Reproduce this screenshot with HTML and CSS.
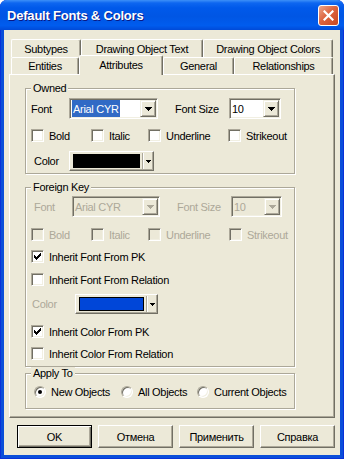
FILE: index.html
```html
<!DOCTYPE html>
<html lang="en">
  <head>
    <meta charset="UTF-8" />
    <title>Default Fonts &amp; Colors</title>
    <link rel="stylesheet" href="styles.css">
  </head>
  <body>
    <div class="window">
      <div class="titlebar">
        <span class="title">Default Fonts &amp; Colors</span>
        <span class="close">
          <svg width="11" height="11" viewBox="0 0 11 11"><path d="M1.5 1.5l8 8M9.5 1.5l-8 8" stroke="#fff" stroke-width="2.2" stroke-linecap="square"/></svg>
        </span>
      </div>

      <div class="client">
        <!-- Tabs, back row first -->
        <div class="tab-row back">
          <div class="tab t-subtypes">Subtypes</div>
          <div class="tab t-text">Drawing Object Text</div>
          <div class="tab t-colors">Drawing Object Colors</div>
        </div>
        <div class="tab-row front">
          <div class="tab t-entities">Entities</div>
          <div class="tab t-attributes selected">Attributes</div>
          <div class="tab t-general">General</div>
          <div class="tab t-relationships">Relationships</div>
        </div>

        <div class="panel">
          <!-- Owned -->
          <div class="group owned">
            <div class="group-label">Owned</div>
            <div class="row font-row">
              <span class="field-label font-label">Font</span>
              <div class="combo combo-font">
                <span class="combo-text"><span class="sel">Arial CYR</span></span>
                <span class="combo-btn"><svg width="7" height="4"><path d="M0 0h7v1H6v1H5v1H4v1H3V3H2V2H1V1H0z"/></svg></span>
              </div>
              <span class="field-label size-label">Font Size</span>
              <div class="combo combo-size">
                <span class="combo-text">10</span>
                <span class="combo-btn"><svg width="7" height="4"><path d="M0 0h7v1H6v1H5v1H4v1H3V3H2V2H1V1H0z"/></svg></span>
              </div>
            </div>
            <div class="row style-row">
              <span class="check c-bold"><span class="box"></span>Bold</span>
              <span class="check c-italic"><span class="box"></span>Italic</span>
              <span class="check c-under"><span class="box"></span>Underline</span>
              <span class="check"><span class="box"></span>Strikeout</span>
            </div>
            <div class="row color-row">
              <span class="field-label color-label">Color</span>
              <div class="color-btn">
                <span class="swatch black"></span>
                <span class="sep"></span>
                <svg class="drop" width="5" height="3"><path d="M0 0h5v1H4v1H3v1H2V2H1V1H0z"/></svg>
              </div>
            </div>
          </div>

          <!-- Foreign Key -->
          <div class="group foreign">
            <div class="group-label">Foreign Key</div>
            <div class="row font-row">
              <span class="field-label font-label disabled">Font</span>
              <div class="combo combo-font disabled">
                <span class="combo-text">Arial CYR</span>
                <span class="combo-btn"><svg width="7" height="4"><path d="M0 0h7v1H6v1H5v1H4v1H3V3H2V2H1V1H0z"/></svg></span>
              </div>
              <span class="field-label size-label disabled">Font Size</span>
              <div class="combo combo-size disabled">
                <span class="combo-text">10</span>
                <span class="combo-btn"><svg width="7" height="4"><path d="M0 0h7v1H6v1H5v1H4v1H3V3H2V2H1V1H0z"/></svg></span>
              </div>
            </div>
            <div class="row style-row disabled">
              <span class="check c-bold"><span class="box"></span>Bold</span>
              <span class="check c-italic"><span class="box"></span>Italic</span>
              <span class="check c-under"><span class="box"></span>Underline</span>
              <span class="check"><span class="box"></span>Strikeout</span>
            </div>
            <div class="row inherit-font-pk">
              <span class="check"><span class="box"><svg width="7" height="7"><path d="M0 2h1v3H0zM1 3h1v3H1zM2 4h1v3H2zM3 3h1v3H3zM4 2h1v3H4zM5 1h1v3H5zM6 0h1v3H6z"/></svg></span>Inherit Font From PK</span>
            </div>
            <div class="row inherit-font-rel">
              <span class="check"><span class="box"></span>Inherit Font From Relation</span>
            </div>
            <div class="row color-row">
              <span class="field-label color-label disabled">Color</span>
              <div class="color-btn">
                <span class="swatch blue"></span>
                <span class="sep"></span>
                <svg class="drop" width="5" height="3"><path d="M0 0h5v1H4v1H3v1H2V2H1V1H0z"/></svg>
              </div>
            </div>
            <div class="row inherit-color-pk">
              <span class="check"><span class="box"><svg width="7" height="7"><path d="M0 2h1v3H0zM1 3h1v3H1zM2 4h1v3H2zM3 3h1v3H3zM4 2h1v3H4zM5 1h1v3H5zM6 0h1v3H6z"/></svg></span>Inherit Color From PK</span>
            </div>
            <div class="row inherit-color-rel">
              <span class="check"><span class="box"></span>Inherit Color From Relation</span>
            </div>
          </div>

          <!-- Apply To -->
          <div class="group apply">
            <div class="group-label">Apply To</div>
            <div class="row radio-row">
              <span class="option o-new"><span class="radio on"></span>New Objects</span>
              <span class="option o-all"><span class="radio"></span>All Objects</span>
              <span class="option"><span class="radio"></span>Current Objects</span>
            </div>
          </div>
        </div>

        <div class="buttons">
          <div class="btn default">OK</div>
          <div class="btn">Отмена</div>
          <div class="btn">Применить</div>
          <div class="btn">Справка</div>
        </div>
      </div>
    </div>
  </body>
</html>
```

FILE: styles.css
```css
* {
  box-sizing: border-box;
}

body {
  margin: 0;
  background: #fff;
  font-family: "Liberation Sans", Arial, sans-serif;
  font-size: 11px;
  letter-spacing: -0.3px;
  color: #000;
}

.window {
  width: 344px;
  height: 459px;
  display: flex;
  flex-direction: column;
  background: #0a4ed9;
  border-radius: 7px 7px 0 0;
  overflow: hidden;
  box-shadow: inset 1px 0 #0831d9, inset -1px 0 #0831d9, inset 0 -1px #0831d9;
}

.titlebar {
  height: 30px;
  flex: none;
  display: flex;
  align-items: center;
  justify-content: space-between;
  padding: 0 5px 0 7px;
  background: linear-gradient(#3d90f8 0, #0d66f0 3px, #0059ea 8px, #0056e4 55%, #005cee 85%, #004ad8 100%);
}

.title {
  color: #fff;
  font-weight: bold;
  font-size: 13px;
  letter-spacing: -0.2px;
  text-shadow: 1px 1px #0a1883;
}

.close {
  width: 21px;
  height: 21px;
  display: flex;
  align-items: center;
  justify-content: center;
  border: 1px solid #fff;
  border-radius: 3px;
  background: linear-gradient(135deg, #eca68c 0, #dd6540 45%, #c9461f 100%);
}

.client {
  flex: 1;
  margin: 0 4px 4px;
  padding-top: 9px;
  background: #ece9d8;
}

/* Tabs */
.tab-row {
  display: flex;
  align-items: flex-start;
  margin-left: 7px;
}

.tab {
  flex: none;
  height: 18px;
  display: flex;
  align-items: center;
  justify-content: center;
  background: #ece9d8;
  border-top: 1px solid #fff;
  border-left: 1px solid #fff;
  border-right: 1px solid #716f64;
  border-radius: 2px 2px 0 0;
  box-shadow: inset -1px 0 #aca899;
}

.tab-row.front .tab {
  height: 17px;
}

.tab-row.front .tab.selected {
  height: 20px;
  margin: -2px 0 -1px;
  position: relative;
  z-index: 1;
  padding-bottom: 2px;
}

.t-subtypes { width: 70px; }
.t-text { width: 122px; }
.t-colors { width: 130px; }
.t-entities { width: 68px; }
.t-attributes { width: 84px; }
.t-general { width: 71px; }
.t-relationships { width: 99px; }

.panel {
  margin-left: 5px;
  width: 326px;
  height: 344px;
  padding: 13px 0 0 15px;
  border: 1px solid;
  border-color: #fff #716f64 #716f64 #fff;
  box-shadow: inset -1px -1px #aca899;
}

/* Group boxes */
.group {
  width: 270px;
  padding: 0 0 2px 5px;
  border: 1px solid #aca899;
  box-shadow: inset 1px 1px #fff, 1px 1px #fff;
}

.group.foreign {
  margin-top: 13px;
  padding-bottom: 6px;
}

.group.apply {
  margin-top: 6px;
  padding-bottom: 10px;
}

.group-label {
  width: fit-content;
  height: 13px;
  line-height: 13px;
  margin-top: -7px;
  padding: 0 2px;
  background: #ece9d8;
}

.row {
  display: flex;
  align-items: center;
}

.disabled,
.disabled .check {
  color: #aca899;
}

.field-label {
  flex: none;
}

/* Font rows */
.font-row {
  height: 21px;
}

.owned .font-row { margin-top: 3px; }
.foreign .font-row { margin-top: 2px; }

.owned .font-label { width: 38px; }
.foreign .font-label { width: 41px; padding-left: 3px; }

.size-label {
  width: 71px;
  padding-left: 17px;
}

.owned .combo-font { width: 89px; }
.foreign .combo-font { width: 88px; }
.owned .combo-size { width: 52px; }
.foreign .combo-size { width: 51px; }

.combo {
  flex: none;
  height: 21px;
  display: flex;
  padding: 1px;
  background: #fff;
  border: 1px solid;
  border-color: #aca899 #fff #fff #aca899;
  box-shadow: inset 1px 1px #716f64, inset -1px -1px #f1efe2;
}

.combo.disabled {
  background: #ece9d8;
}

.combo-text {
  flex: 1;
  display: flex;
  align-items: center;
  padding-left: 1px;
}

.combo-text .sel {
  height: 100%;
  display: flex;
  align-items: center;
  padding: 0 1px;
  background: #316ac5;
  color: #fff;
}

.combo-btn {
  width: 16px;
  display: flex;
  align-items: center;
  justify-content: center;
  background: #ece9d8;
  border: 1px solid;
  border-color: #f1efe2 #716f64 #716f64 #f1efe2;
  box-shadow: inset 1px 1px #fff, inset -1px -1px #aca899;
}

.combo.disabled .combo-btn svg {
  fill: #aca899;
}

/* Checkboxes */
.style-row {
  height: 13px;
}

.owned .style-row { margin-top: 10px; }
.foreign .style-row { margin-top: 11px; }

.check {
  flex: none;
  display: flex;
  align-items: center;
  gap: 5px;
  height: 13px;
}

.c-bold { width: 60px; }
.c-italic { width: 57px; }
.owned .c-under { width: 80px; }
.foreign .c-under { width: 81px; }

.box {
  flex: none;
  width: 13px;
  height: 13px;
  display: flex;
  align-items: center;
  justify-content: center;
  background: #fff;
  border: 1px solid;
  border-color: #aca899 #fff #fff #aca899;
  box-shadow: inset 1px 1px #716f64, inset -1px -1px #f1efe2;
}

.disabled .box {
  background: #ece9d8;
}

.inherit-font-pk { margin-top: 9px; }
.inherit-font-rel { margin-top: 10px; }
.inherit-color-pk { margin-top: 11px; }
.inherit-color-rel { margin-top: 9px; }

/* Color pickers */
.color-row {
  height: 20px;
}

.owned .color-row { margin-top: 9px; }
.foreign .color-row { margin-top: 8px; }

.owned .color-label { width: 38px; padding-left: 3px; }
.foreign .color-label { width: 44px; padding-left: 1px; }

.color-btn {
  flex: none;
  height: 20px;
  display: flex;
  align-items: center;
  padding: 0 1px 0 3px;
  background: #ece9d8;
  border: 1px solid;
  border-color: #fff #716f64 #716f64 #fff;
  box-shadow: inset -1px -1px #aca899;
}

.owned .color-btn { width: 85px; }
.foreign .color-btn { width: 83px; }

.swatch {
  flex: none;
  height: 14px;
  border: 1px solid #000;
}

.owned .swatch { width: 67px; }
.foreign .swatch { width: 65px; }

.swatch.black { background: #000; }
.swatch.blue { background: #0046d8; }

.sep {
  flex: none;
  width: 2px;
  height: 16px;
  margin: 0 2px;
  border-left: 1px solid #aca899;
  border-right: 1px solid #fff;
}

.drop {
  flex: none;
}

/* Radios */
.radio-row {
  height: 13px;
  margin-top: 5px;
  padding-left: 3px;
}

.option {
  flex: none;
  display: flex;
  align-items: center;
  gap: 5px;
}

.o-new { width: 87px; }
.o-all { width: 76px; }

.radio {
  width: 12px;
  height: 12px;
  display: flex;
  align-items: center;
  justify-content: center;
  border-radius: 50%;
  background: #fff;
  border: 1px solid;
  border-color: #aca899 #fff #fff #aca899;
  box-shadow: inset 1px 1px #716f64, inset -1px -1px #f1efe2;
}

.radio.on::after {
  content: "";
  width: 4px;
  height: 4px;
  border-radius: 50%;
  background: #000;
}

/* Dialog buttons */
.buttons {
  display: flex;
  gap: 6px;
  margin: 7px 0 0 13px;
}

.btn {
  width: 75px;
  height: 23px;
  display: flex;
  align-items: center;
  justify-content: center;
  background: #ece9d8;
  border: 1px solid;
  border-color: #fff #716f64 #716f64 #fff;
  box-shadow: inset -1px -1px #aca899;
}

.btn.default {
  border-color: #000;
  box-shadow: inset 1px 1px #fff, inset -1px -1px #716f64, inset -2px -2px #aca899;
}
```
